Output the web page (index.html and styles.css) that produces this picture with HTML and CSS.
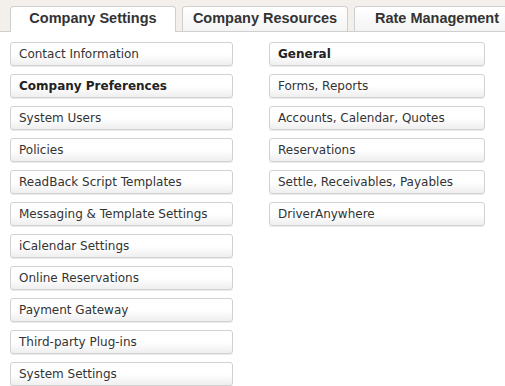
FILE: index.html
```html
<!DOCTYPE html>
<html>
<head>
<meta charset="utf-8">
<link rel="stylesheet" href="styles.css">
</head>
<body>
<div class="tabbar">
  <div class="tab active">Company Settings</div>
  <div class="tab">Company Resources</div>
  <div class="tab">Rate Management</div>
</div>
<div class="content">
  <div class="col left">
    <div class="item">Contact Information</div>
    <div class="item sel">Company Preferences</div>
    <div class="item">System Users</div>
    <div class="item">Policies</div>
    <div class="item">ReadBack Script Templates</div>
    <div class="item">Messaging &amp; Template Settings</div>
    <div class="item">iCalendar Settings</div>
    <div class="item">Online Reservations</div>
    <div class="item">Payment Gateway</div>
    <div class="item">Third-party Plug-ins</div>
    <div class="item">System Settings</div>
  </div>
  <div class="col right">
    <div class="item sel">General</div>
    <div class="item">Forms, Reports</div>
    <div class="item">Accounts, Calendar, Quotes</div>
    <div class="item">Reservations</div>
    <div class="item">Settle, Receivables, Payables</div>
    <div class="item">DriverAnywhere</div>
  </div>
</div>
</body>
</html>
```

FILE: styles.css
```css
html, body {
  margin: 0;
  padding: 0;
  background: #fff;
  overflow: hidden;
}
body {
  width: 505px;
  height: 386px;
}
.tabbar {
  display: flex;
  align-items: flex-end;
  gap: 6px;
  height: 31px;
  padding-left: 10px;
  background: #f3f0eb;
  border-bottom: 1px solid #cfcfcf;
  box-sizing: content-box;
}
.tab {
  flex: none;
  width: 164px;
  height: 24px;
  border: 1px solid #cfcfcf;
  border-bottom: none;
  border-radius: 4px 4px 0 0;
  background: linear-gradient(#ffffff, #f4f4f4);
  font-family: "Liberation Sans", Arial, sans-serif;
  font-weight: bold;
  font-size: 14.5px;
  color: #333;
  text-align: center;
  line-height: 22px;
}
.tab.active {
  background: #fff;
  height: 25px;
  margin-bottom: -1px;
  line-height: 23px;
}
.content {
  display: flex;
  gap: 36px;
  padding: 10px 0 0 10px;
}
.col {
  display: flex;
  flex-direction: column;
  gap: 8px;
}
.col.left { width: 223px; }
.col.right { width: 216px; }
.item {
  height: 22px;
  border: 1px solid #d2d2d2;
  border-radius: 3px;
  background: linear-gradient(#ffffff 50%, #efefef);
  box-shadow: 0 1px 0 #ebebeb;
  font-family: "DejaVu Sans", Verdana, sans-serif;
  font-size: 12px;
  color: #333;
  line-height: 22px;
  padding-left: 8px;
  white-space: nowrap;
}
.item.sel {
  font-weight: bold;
  color: #222;
}
```
